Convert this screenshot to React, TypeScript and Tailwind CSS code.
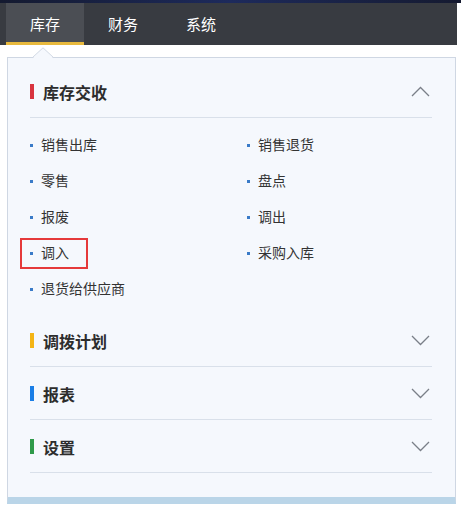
import React from 'react';

const tabs = ['库存', '财务', '系统'];

const items = ['销售出库', '销售退货', '零售', '盘点', '报废', '调出', '调入', '采购入库', '退货给供应商'];

const sections = [
  { title: '调拨计划', color: 'bg-[#f4b516]' },
  { title: '报表', color: 'bg-[#1a7ee6]' },
  { title: '设置', color: 'bg-[#2f9a4a]' },
];

function Chevron({ up }: { up?: boolean }) {
  return (
    <svg width="19" height="11" viewBox="0 0 19 11" className="mr-[2px]">
      <polyline
        points={up ? '1,10 9.5,1.5 18,10' : '1,1 9.5,9.5 18,1'}
        fill="none"
        stroke="#7a7f88"
        strokeWidth="1.3"
      />
    </svg>
  );
}

function Header({ title, color, up }: { title: string; color: string; up?: boolean }) {
  return (
    <div className="h-[53px] flex items-center border-b border-[#d9e0ea] pt-[1px]">
      <span className={`w-[4px] h-[15px] mr-[9px] ${color}`} />
      <span className="flex-1 text-[16px] font-bold text-[#2d2d2d]">{title}</span>
      <Chevron up={up} />
    </div>
  );
}

export default function App() {
  return (
    <div className="w-[461px] h-[508px] bg-white overflow-hidden font-['Noto_Sans_CJK_SC','Microsoft_YaHei',sans-serif]">
      <div className="h-[3px] bg-gradient-to-r from-[#141a30] via-[#1d2a5c] to-[#151a30]" />
      <div className="w-[457px] h-[42px] bg-[#383b41] flex pl-[6px]">
        {tabs.map((t, i) => (
          <div
            key={t}
            className={
              i === 0
                ? 'w-[78px] bg-[#4b4e54] border-b-[3px] border-[#e8b93d] flex items-center justify-center text-white text-[15px] pt-[3px]'
                : 'w-[78px] flex items-center justify-center text-white text-[15px] pt-[1px]'
            }
          >
            {t}
          </div>
        ))}
      </div>

      <div className="relative mt-[12px] ml-[7px] w-[449px] bg-[#f5f8fd] border border-[#cfd7e3] border-b-[7px] border-b-[#bad5e8] pl-[22px] pr-[23px] pt-[7px] pb-[24px]">
        <svg width="22" height="12" viewBox="0 0 22 12" className="absolute left-[24px] top-[-11px]">
          <polygon points="0,12 11,0.8 22,12" fill="#f5f8fd" />
          <polyline points="0,11 11,0.8 22,11" fill="none" stroke="#cfd7e3" strokeWidth="1" />
        </svg>

        <Header title="库存交收" color="bg-[#d8343f]" up />
        <div className="grid grid-cols-[217px_1fr] pt-[10px] pb-[6px]">
          {items.map((it) => (
            <div key={it} className="relative h-9 flex items-center pb-[3px]">
              <span className="w-[3px] h-[3px] bg-[#3a7bc8] mr-[8px] mt-[2px]" />
              <span className="text-[14px] text-[#333]">{it}</span>
              {it === '调入' && (
                <span className="absolute left-[-10px] top-[2px] w-[68px] h-[31px] border-2 border-[#e5393b]" />
              )}
            </div>
          ))}
        </div>

        {sections.map((s) => (
          <Header key={s.title} title={s.title} color={s.color} />
        ))}
      </div>
    </div>
  );
}
